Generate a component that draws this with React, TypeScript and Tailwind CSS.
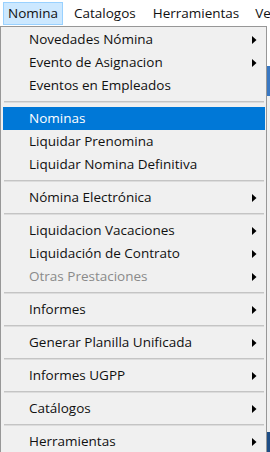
type Item =
  | { kind: "item"; label: string; sub?: boolean; active?: boolean; disabled?: boolean }
  | { kind: "sep" };

const items: Item[] = [
  { kind: "item", label: "Novedades Nómina", sub: true },
  { kind: "item", label: "Evento de Asignacion", sub: true },
  { kind: "item", label: "Eventos en Empleados" },
  { kind: "sep" },
  { kind: "item", label: "Nominas", active: true },
  { kind: "item", label: "Liquidar Prenomina" },
  { kind: "item", label: "Liquidar Nomina Definitiva" },
  { kind: "sep" },
  { kind: "item", label: "Nómina Electrónica", sub: true },
  { kind: "sep" },
  { kind: "item", label: "Liquidacion Vacaciones", sub: true },
  { kind: "item", label: "Liquidación de Contrato", sub: true },
  { kind: "item", label: "Otras Prestaciones", sub: true, disabled: true },
  { kind: "sep" },
  { kind: "item", label: "Informes", sub: true },
  { kind: "sep" },
  { kind: "item", label: "Generar Planilla Unificada", sub: true },
  { kind: "sep" },
  { kind: "item", label: "Informes UGPP", sub: true },
  { kind: "sep" },
  { kind: "item", label: "Catálogos", sub: true },
  { kind: "sep" },
  { kind: "item", label: "Herramientas", sub: true },
];

function Arrow() {
  return (
    <svg width="5" height="8" viewBox="0 0 5 8" className="shrink-0">
      <path d="M0 0 L4.5 4 L0 8 Z" fill="#000" />
    </svg>
  );
}

export default function App() {
  return (
    <div
      className="w-[270px] h-[452px] overflow-hidden bg-white text-[#111]"
      style={{ fontFamily: '"Open Sans", "Noto Sans", "DejaVu Sans", sans-serif' }}
    >
      {/* Barra de menu */}
      <div className="h-[26px] flex items-center text-[13.5px] whitespace-nowrap">
        <div className="ml-[3px] h-[23px] px-[4px] flex items-center bg-[#cce8ff] border border-[#99d1ff]">
          Nomina
        </div>
        <div className="ml-[9px] px-[2px]">Catalogos</div>
        <div className="ml-[13px] px-[2px]">Herramientas</div>
        <div className="ml-[12px] px-[2px]">Ve</div>
      </div>

      <div className="flex">
        {/* Menu desplegable */}
        <div className="w-[267px] shrink-0 bg-[#f0f0f0] border border-[#979797] pl-[2px] pr-[1px] pt-[1px] pb-[4px] text-[13.5px]">
          {items.map((it, i) =>
            it.kind === "sep" ? (
              <div key={i} className="h-[10px] flex items-center pl-[1px] pr-[1px]">
                <div className="w-full h-[2px] bg-[#c4c4c4] border-b border-[#dcdcdc]" />
              </div>
            ) : (
              <div
                key={i}
                className={
                  "h-[23px] flex items-center pl-[26px] pr-[8px] " +
                  (it.active ? "bg-[#0078d7] text-white" : "") +
                  (it.disabled ? " text-[#8a8a8a]" : "")
                }
              >
                <span className="flex-1 whitespace-nowrap">{it.label}</span>
                {it.sub && <Arrow />}
              </div>
            )
          )}
        </div>

        {/* Fondo de la ventana */}
        <div className="flex-1 flex flex-col bg-[#f5f5f5]">
          <div className="h-[40px] bg-white" />
          <div className="h-[30px] bg-[#3a78c2]" />
          <div className="flex-1 bg-[#f0f0f0]" />
          <div className="h-[26px] bg-[#1f4e86]" />
        </div>
      </div>
    </div>
  );
}
